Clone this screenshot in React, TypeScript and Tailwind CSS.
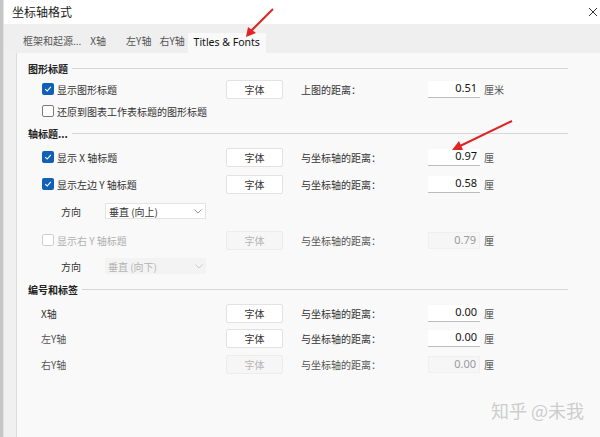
import React from 'react';

const cjk = "font-['Noto_Sans_CJK_SC',sans-serif]";
const latin = "font-['Noto_Sans','Noto_Sans_CJK_SC',sans-serif]";

function Check({ checked, disabled }: { checked?: boolean; disabled?: boolean }) {
  if (checked) {
    return (
      <span className="flex h-[12px] w-[12px] items-center justify-center rounded-[2px] bg-[#1060b8]">
        <svg width="8" height="8" viewBox="0 0 8 8">
          <path d="M1.2 4.2 L3.2 6 L6.8 1.8" fill="none" stroke="white" strokeWidth="1.1" />
        </svg>
      </span>
    );
  }
  return (
    <span
      className={`h-[12px] w-[12px] rounded-[2px] border bg-white ${disabled ? 'border-[#cfcfcf]' : 'border-[#7a7a7a]'}`}
    />
  );
}

function FontButton({ disabled }: { disabled?: boolean }) {
  return (
    <div
      className={`flex h-[19px] w-[57px] items-center justify-center rounded-[2px] border text-[10px] ${
        disabled ? 'border-[#ececec] bg-[#f6f6f6] text-[#b4b4b4]' : 'border-[#e2e2e2] bg-white text-[#333]'
      }`}
    >
      字体
    </div>
  );
}

function Distance({ label, value, unit, disabled }: { label: string; value: string; unit: string; disabled?: boolean }) {
  return (
    <>
      <span className={`ml-[18px] w-[127px] text-[10px] ${disabled ? 'text-[#555]' : 'text-[#333]'}`}>{label}</span>
      <div
        className={`flex h-[17px] w-[52px] items-center justify-end pr-[3px] ${
          disabled ? 'border border-[#f0f0f0] bg-[#f6f6f6] text-[#9a9a9a]' : 'border-b border-[#bdbdbd] bg-white text-[#111]'
        }`}
      >
        <span className={`${latin} text-[11px]`}>{value}</span>
      </div>
      <span className="ml-[4px] text-[10px] text-[#555]">{unit}</span>
    </>
  );
}

function Header({ title, className }: { title: string; className?: string }) {
  return (
    <div className={`flex h-[16px] items-center pl-[11px] pr-[32px] ${className ?? ''}`}>
      <span className="text-[10px] font-bold text-[#222]">{title}</span>
      <div className="ml-[4px] h-px flex-1 bg-[#d6d6d6]" />
    </div>
  );
}

function Dropdown({ text, disabled }: { text: string; disabled?: boolean }) {
  return (
    <div
      className={`flex h-[16px] w-[101px] items-center justify-between px-[3px] text-[10px] ${
        disabled ? 'bg-[#f3f3f3] text-[#b4b4b4]' : 'border border-[#e4e4e4] bg-white text-[#333]'
      }`}
    >
      <span>{text}</span>
      <svg width="8" height="5" viewBox="0 0 8 5">
        <path d="M0.5 0.5 L4 4 L7.5 0.5" fill="none" stroke={disabled ? '#c8c8c8' : '#888'} strokeWidth="0.9" />
      </svg>
    </div>
  );
}

export default function App() {
  return (
    <div className={`relative flex h-[437px] w-[600px] overflow-hidden bg-[#f0f0f0] ${cjk}`}>
      <div className="w-[3px] bg-[#c6c6c6]" />
      <div className="w-px bg-[#e2e2e2]" />
      <div className="flex flex-1 flex-col">
        {/* Title bar */}
        <div className="flex h-[24px] items-center justify-between bg-white pl-[8px] pr-[2px]">
          <span className="text-[12px] text-[#1a1a1a]">坐标轴格式</span>
          <svg width="10" height="10" viewBox="0 0 10 10">
            <path d="M1 1 L9 9 M9 1 L1 9" stroke="#333" strokeWidth="1" />
          </svg>
        </div>

        {/* Tabs */}
        <div className="flex h-[29px] items-end whitespace-nowrap bg-[#efefef] text-[10px] text-[#555]">
          <span className="mb-[5px] ml-[19px]">框架和起源...</span>
          <span className="mb-[5px] ml-[9px]">X轴</span>
          <span className="mb-[5px] ml-[20px]">左Y轴</span>
          <span className="mb-[5px] ml-[8px]">右Y轴</span>
          <div className={`ml-[3px] flex h-[20px] w-[78px] items-center justify-center bg-[#f9f9f9] text-[10.5px] text-[#111] ${latin}`}>
            Titles &amp; Fonts
          </div>
        </div>

        {/* Panel */}
        <div className="ml-[12px] flex flex-1 flex-col border-l border-[#dcdcdc] bg-[#f9f9f9] pt-[7px]">
          <Header title="图形标题" />
          <div className="mt-[3px] flex h-[20px] items-center pl-[25px]">
            <div className="flex w-[184px] items-center gap-[3px]">
              <Check checked />
              <span className="text-[10px] text-[#333]">显示图形标题</span>
            </div>
            <FontButton />
            <Distance label="上图的距离：" value="0.51" unit="厘米" />
          </div>
          <div className="mt-[2px] flex h-[20px] items-center gap-[3px] pl-[25px]">
            <Check />
            <span className="text-[10px] text-[#333]">还原到图表工作表标题的图形标题</span>
          </div>

          <Header title="轴标题..." className="mt-[4px]" />
          <div className="mt-[6px] flex h-[20px] items-center pl-[25px]">
            <div className="flex w-[184px] items-center gap-[3px]">
              <Check checked />
              <span className="text-[10px] text-[#333]">显示 X 轴标题</span>
            </div>
            <FontButton />
            <Distance label="与坐标轴的距离：" value="0.97" unit="厘" />
          </div>
          <div className="mt-[7px] flex h-[20px] items-center pl-[25px]">
            <div className="flex w-[184px] items-center gap-[3px]">
              <Check checked />
              <span className="text-[10px] text-[#333]">显示左边 Y 轴标题</span>
            </div>
            <FontButton />
            <Distance label="与坐标轴的距离：" value="0.58" unit="厘" />
          </div>
          <div className="mt-[7px] flex h-[20px] items-center pl-[44px]">
            <span className="w-[44px] text-[10px] text-[#333]">方向</span>
            <Dropdown text="垂直 (向上)" />
          </div>
          <div className="mt-[9px] flex h-[20px] items-center pl-[25px]">
            <div className="flex w-[184px] items-center gap-[3px]">
              <Check disabled />
              <span className="text-[10px] text-[#b0b0b0]">显示右 Y 轴标题</span>
            </div>
            <FontButton disabled />
            <Distance label="与坐标轴的距离：" value="0.79" unit="厘" disabled />
          </div>
          <div className="mt-[6px] flex h-[20px] items-center pl-[44px]">
            <span className="w-[44px] text-[10px] text-[#333]">方向</span>
            <Dropdown text="垂直 (向下)" disabled />
          </div>

          <Header title="编号和标签" className="mt-[5px]" />
          <div className="mt-[6px] flex h-[20px] items-center pl-[24px]">
            <span className="w-[185px] text-[10px] text-[#333]">X轴</span>
            <FontButton />
            <Distance label="与坐标轴的距离：" value="0.00" unit="厘" />
          </div>
          <div className="mt-[5px] flex h-[20px] items-center pl-[24px]">
            <span className="w-[185px] text-[10px] text-[#555]">左Y轴</span>
            <FontButton />
            <Distance label="与坐标轴的距离：" value="0.00" unit="厘" />
          </div>
          <div className="mt-[6px] flex h-[20px] items-center pl-[24px]">
            <span className="w-[185px] text-[10px] text-[#555]">右Y轴</span>
            <FontButton disabled />
            <Distance label="与坐标轴的距离：" value="0.00" unit="厘" disabled />
          </div>
        </div>
      </div>

      {/* Watermark */}
      <span className="absolute left-[491px] top-[397px] text-[18px] text-[#cdcdcd]">知乎 @未我</span>

      {/* Red annotation arrows */}
      <svg className="pointer-events-none absolute left-0 top-0" width="600" height="437">
        <line x1="273" y1="9" x2="251" y2="31" stroke="#e02424" strokeWidth="2" />
        <polygon points="246,37 248,27 256,33" fill="#e02424" />
        <line x1="512" y1="121" x2="460" y2="146" stroke="#e02424" strokeWidth="2" />
        <polygon points="452,150 459,141 463,150" fill="#e02424" />
      </svg>
    </div>
  );
}
